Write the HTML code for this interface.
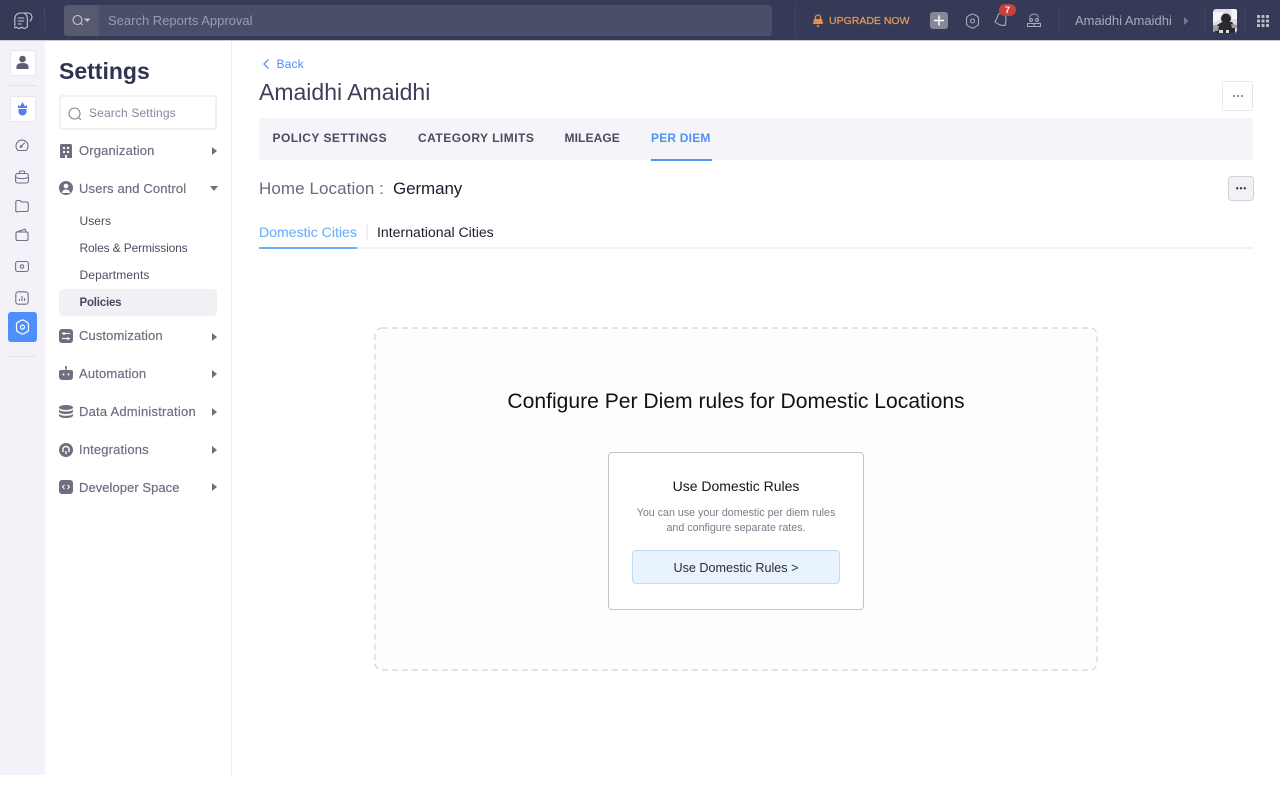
<!DOCTYPE html>
<html><head><meta charset="utf-8">
<style>
html,body{margin:0;padding:0;background:#fff;width:1280px;height:800px;overflow:hidden}
body{font-family:"Liberation Sans",sans-serif;position:relative}
.a{position:absolute;white-space:nowrap}
.t{position:absolute;white-space:nowrap;line-height:16px}
svg{position:absolute;overflow:visible}
.nav{font-size:13px;color:#6f6f82;letter-spacing:.15px;font-weight:400;left:79px;-webkit-text-stroke:.2px #6f6f82}
.sub{font-size:12px;color:#4d4e62;left:79.5px;letter-spacing:.05px}
.tab{font-size:12px;font-weight:700;color:#4a4b60;top:130px}
</style></head><body>
<!-- top bar -->
<div class="a" style="left:0;top:0;width:1280px;height:40px;background:#353a57"></div>
<div class="a" style="left:0;top:40px;width:1280px;height:1px;background:#c9cad6"></div>
<div class="a" style="left:44px;top:8px;height:26px;border-left:1px dotted #4d5270"></div>
<div class="a" style="left:64px;top:5px;width:708px;height:31px;background:#4a4e69;border-radius:3px"></div>
<div class="a" style="left:64px;top:5px;width:35px;height:31px;background:#57596f;border-radius:3px 0 0 3px"></div>
<svg style="left:14px;top:12px" width="19" height="18" viewBox="0 0 19 18" fill="none" stroke="#c9cad6" stroke-width="1.100" stroke-linecap="round" stroke-linejoin="round"><path d="M.8 14V6.500A5.500 5.500 0 0 1 6.300 1H14a4 4 0 0 1 4 4c0 1.800-.8 3-2 4"/><path d="M10.500 1.300c2 1.300 2.800 3 2.800 5.200v8.500c-1.200.8-2 1.500-3 1.500s-1.500-1.200-2.500-1.200-1.700 1.200-2.800 1.200-1.700-1.200-2.700-1.200-1.200.4-1.800.5"/><path d="M4.200 6h5.500M4.200 9h5.500M4.200 12h3"/></svg>
<svg style="left:72px;top:14px" width="20" height="14" viewBox="0 0 20 14" fill="none" stroke="#c5c6d2" stroke-width="1.100"><circle cx="5.500" cy="6" r="4.500"/><path d="M9 9.500l1.500 1.500"/><path d="M12 4.500h6.500l-3.200 3.500z" fill="#c5c6d2" stroke="none"/></svg>
<div class="t" style="left:108px;top:13px;font-size:13px;color:#9a9bac;letter-spacing:0">Search Reports Approval</div>
<div class="a" style="left:795px;top:4px;height:33px;border-left:1px dotted #4d5270"></div>
<svg style="left:812px;top:13px" width="12" height="15" viewBox="0 0 12 15"><path d="M3.500 6V4.500a2.500 2.500 0 0 1 5 0V6" fill="none" stroke="#e88f45" stroke-width="1.300"/><path d="M2 6h8l1 5H1z" fill="#e88f45"/><circle cx="6" cy="13" r="1.300" fill="#e46a4a"/></svg>
<div class="t" style="left:829px;top:12.500px;font-size:10.500px;font-weight:400;color:#e59a50;-webkit-text-stroke:.25px #e59a50;letter-spacing:0">UPGRADE NOW</div>
<div class="a" style="left:930px;top:12px;width:18px;height:17px;background:#85879a;border-radius:3px"></div>
<svg style="left:930px;top:12px" width="18" height="17" fill="none" stroke="#fff" stroke-width="1.500"><path d="M9 3.500v10M4 8.500h10"/></svg>
<svg style="left:965px;top:13px" width="15" height="16" viewBox="0 0 15 16" fill="none" stroke="#a9abbb" stroke-width="1.100"><path d="M6 1.400q1.500-.8 3 0l3.200 1.800q1.300.8 1.300 2.400v4.800q0 1.600-1.300 2.400l-3.200 1.800q-1.500.8-3 0l-3.200-1.800q-1.300-.8-1.300-2.400V5.600q0-1.600 1.300-2.400z"/><circle cx="7.500" cy="8" r="2"/></svg>
<svg style="left:994px;top:12px" width="15" height="15" viewBox="0 0 15 15" fill="none" stroke="#a9abbb" stroke-width="1.100" stroke-linejoin="round"><path d="M.8 9.500C2.500 8 3 6.500 3.500 4.500 4 2 6 1 8 1.500s4 2 4 4.500c0 2.500-.4 4.500-.7 7.300-3.800.5-7.500-.8-10.500-3.800z"/></svg>
<div class="a" style="left:999px;top:4px;width:17px;height:12px;border-radius:6px;background:#c8413f;color:#fff;font-size:9px;font-weight:700;line-height:12px;text-align:center">7</div>
<svg style="left:1026px;top:13px" width="16" height="15" viewBox="0 0 16 15" fill="none" stroke="#a9abbb" stroke-width="1.100"><circle cx="5" cy="7" r="1.400"/><circle cx="11" cy="7" r="1.400"/><path d="M3.500 4.500c1-4.500 8-4.500 9 0M1.500 10.500h13v3H1.500zM8 10.500v3"/></svg>
<div class="a" style="left:1059px;top:9px;height:23px;border-left:1px dotted #4d5270"></div>
<div class="t" style="left:1075px;top:12.500px;font-size:13px;color:#a9abbb;letter-spacing:0">Amaidhi Amaidhi</div>
<svg style="left:1184px;top:17px" width="5" height="8"><path d="M0 0l4.500 4L0 8z" fill="#74778d"/></svg>
<div class="a" style="left:1204px;top:9px;height:23px;border-left:1px dotted #4d5270"></div>
<svg style="left:1213px;top:9px" width="24" height="24" viewBox="0 0 24 24"><rect width="24" height="24" rx="3" fill="#dcdce2"/><path d="M0 3h10l-4 8-6 3z" fill="#f4f4f6"/><path d="M18 0h4a2 2 0 0 1 2 2v8h-5z" fill="#f6f6f8"/><circle cx="13" cy="9.500" r="5" fill="#26262c"/><path d="M4 16l5-3h10l3 5v6H1l1-3z" fill="#2a2a32"/><path d="M0 16l6 1-1 5-5 0zM18 15l6 1v3h-5z" fill="#9b9ca4"/><path d="M6 21h4v3H6zM13 21h3v3h-3z" fill="#dcdce2"/></svg>
<div class="a" style="left:1244px;top:9px;height:23px;border-left:1px dotted #4d5270"></div>
<svg style="left:1257px;top:15px" width="12" height="12" fill="#b9bbc9"><rect width="3" height="3" rx=".6"/><rect x="4.500" width="3" height="3" rx=".6"/><rect x="9" width="3" height="3" rx=".6"/><rect y="4.500" width="3" height="3" rx=".6"/><rect x="4.500" y="4.500" width="3" height="3" rx=".6"/><rect x="9" y="4.500" width="3" height="3" rx=".6"/><rect y="9" width="3" height="3" rx=".6"/><rect x="4.500" y="9" width="3" height="3" rx=".6"/><rect x="9" y="9" width="3" height="3" rx=".6"/></svg>

<!-- left rail -->
<div class="a" style="left:0;top:41px;width:45px;height:734px;background:#f2f2f8"></div>
<div class="a" style="left:231px;top:41px;width:1px;height:734px;background:#f0f0f4"></div>
<div class="a" style="left:10px;top:50px;width:24px;height:24px;background:#fff;border:1px solid #e6e6ee;border-radius:3px"></div>
<svg style="left:16px;top:55px" width="13" height="15" viewBox="0 0 13 15" fill="#5b5d72"><circle cx="6.500" cy="4" r="3.300"/><path d="M.5 14v-2.500c0-2 2-3.500 6-3.500s6 1.500 6 3.500V14z"/></svg>
<div class="a" style="left:8px;top:85px;width:29px;height:1px;background:#e2e2ea"></div>
<div class="a" style="left:10px;top:96px;width:24px;height:24px;background:#fff;border:1px solid #e6e6ee;border-radius:3px"></div>
<svg style="left:17px;top:101px" width="11" height="15" viewBox="0 0 11 15" fill="#4f7fe8"><path d="M1 4l2 1.500L5.500 1 8 5.500 10 4v3H1z"/><path d="M1.500 8h8v3.500c-1 2-2.500 3-4 3s-3-1-4-3z"/></svg>
<svg style="left:15px;top:138px" width="14" height="14" viewBox="0 0 14 14" fill="none" stroke="#6e7085" stroke-width="1.100" stroke-linecap="round"><path d="M3 12.500h8a6 6 0 1 0-8 0z" stroke-linejoin="round"/><path d="M6 8.500L9.500 5"/><circle cx="6" cy="8.500" r=".8"/></svg>
<svg style="left:15px;top:170px" width="14" height="14" viewBox="0 0 14 14" fill="none" stroke="#6e7085" stroke-width="1.100"><rect x=".6" y="3.500" width="12.800" height="9.500" rx="2"/><path d="M4.500 3.500V2a1 1 0 0 1 1-1h3a1 1 0 0 1 1 1v1.500M.6 7.500c4 1.500 8.800 1.500 12.800 0"/></svg>
<svg style="left:15px;top:199px" width="14" height="14" viewBox="0 0 14 14" fill="none" stroke="#6e7085" stroke-width="1.100"><path d="M.8 3a1.500 1.500 0 0 1 1.500-1.500h3l1 1.500h5.500a1.500 1.500 0 0 1 1.500 1.500V11a1.500 1.500 0 0 1-1.500 1.500h-8.500A1.500 1.500 0 0 1 .8 11z"/></svg>
<svg style="left:15px;top:228px" width="14" height="14" viewBox="0 0 14 14" fill="none" stroke="#6e7085" stroke-width="1.100"><path d="M1 5.500C1 4.500 1.500 4 2.500 3.700L10 1.200l1.200 2.800M1 5.500V11a1.500 1.500 0 0 0 1.500 1.500h9A1.500 1.500 0 0 0 13 11V5.500A1.500 1.500 0 0 0 11.500 4h-9"/></svg>
<svg style="left:15px;top:260px" width="14" height="13" viewBox="0 0 14 13" fill="none" stroke="#6e7085" stroke-width="1.100"><rect x=".6" y="1.500" width="12.800" height="10" rx="2"/><circle cx="7" cy="6.500" r="1.700"/></svg>
<svg style="left:15px;top:291px" width="14" height="14" viewBox="0 0 14 14" fill="none" stroke="#6e7085" stroke-width="1.100"><rect x=".8" y=".8" width="12.400" height="12.400" rx="2.500"/><path d="M4.500 10V8M7 10V5M9.500 10V7"/></svg>
<div class="a" style="left:8px;top:312px;width:29px;height:30px;background:#4e8ffb;border-radius:3px"></div>
<svg style="left:15px;top:319px" width="15" height="16" viewBox="0 0 15 16" fill="none" stroke="#fff" stroke-width="1.200"><path d="M6 1.400q1.500-.8 3 0l3.200 1.800q1.300.8 1.300 2.400v4.800q0 1.600-1.300 2.400l-3.200 1.800q-1.500.8-3 0l-3.200-1.800q-1.300-.8-1.300-2.400V5.600q0-1.600 1.300-2.400z"/><circle cx="7.500" cy="8" r="2"/></svg>
<div class="a" style="left:9px;top:356px;width:27px;height:1px;background:#e2e2ea"></div>

<!-- settings column -->
<div class="t" style="left:59px;top:57px;line-height:28px;font-size:23px;font-weight:700;color:#303450">Settings</div>
<div class="a" style="left:59px;top:95px;border:2px solid #f0f0f5;border-radius:3px;width:154px;height:31px"></div>
<svg style="left:68px;top:107px" width="14" height="14" fill="none" stroke="#85879a" stroke-width="1.100"><circle cx="6.500" cy="6.500" r="5.500"/><path d="M10.500 10.500l2.500 2.500"/></svg>
<div class="t" style="left:89px;top:104.500px;font-size:12px;color:#85879a;letter-spacing:.14px">Search Settings</div>

<svg style="left:60px;top:144px" width="12" height="14" fill="#6f6f82"><path d="M0 1.500A1.500 1.500 0 0 1 1.500 0h9A1.500 1.500 0 0 1 12 1.500V14H0z"/><path d="M3 3h2v2H3zM7 3h2v2H7zM3 7h2v2H3zM7 7h2v2H7zM5 11h2v3H5z" fill="#fff"/></svg>
<div class="t nav" style="top:143px">Organization</div>
<svg style="left:212px;top:147px" width="5" height="8"><path d="M0 0l5 4-5 4z" fill="#6f6f82"/></svg>

<svg style="left:59px;top:181px" width="14" height="14"><circle cx="7" cy="7" r="7" fill="#6f6f82"/><circle cx="7" cy="5" r="2.300" fill="#fff"/><path d="M2.800 12c.5-2.500 2-3.500 4.200-3.500s3.700 1 4.200 3.500" fill="#fff"/></svg>
<div class="t nav" style="top:181px">Users and Control</div>
<svg style="left:210px;top:186px" width="8" height="5"><path d="M0 0h8L4 5z" fill="#6f6f82"/></svg>

<div class="t sub" style="top:213px">Users</div>
<div class="t sub" style="top:240px;letter-spacing:-.14px">Roles &amp; Permissions</div>
<div class="t sub" style="top:267px;letter-spacing:.12px">Departments</div>
<div class="a" style="left:59px;top:289px;width:158px;height:27px;background:#f1f1f5;border-radius:4px"></div>
<div class="t sub" style="top:294.500px;font-size:11.500px;font-weight:700;letter-spacing:-.2px;color:#47485d">Policies</div>

<svg style="left:59px;top:329px" width="14" height="14"><rect width="14" height="14" rx="3" fill="#6f6f82"/><path d="M3 4.500h8M3 9.500h8" stroke="#fff" stroke-width="1"/><circle cx="5" cy="4.500" r="1.300" fill="#fff"/><circle cx="9" cy="9.500" r="1.300" fill="#fff"/></svg>
<div class="t nav" style="top:328px;letter-spacing:.1px">Customization</div>
<svg style="left:212px;top:333px" width="5" height="8"><path d="M0 0l5 4-5 4z" fill="#6f6f82"/></svg>

<svg style="left:59px;top:366px" width="14" height="14" fill="#6f6f82"><rect x="6.300" y="0" width="1.400" height="4"/><circle cx="7" cy="1" r="1"/><path d="M0 6a2 2 0 0 1 2-2h10a2 2 0 0 1 2 2v5a3 3 0 0 1-3 3H3a3 3 0 0 1-3-3z"/><circle cx="4.500" cy="8.500" r="1" fill="#fff"/><circle cx="9.500" cy="8.500" r="1" fill="#fff"/></svg>
<div class="t nav" style="top:366px">Automation</div>
<svg style="left:212px;top:370px" width="5" height="8"><path d="M0 0l5 4-5 4z" fill="#6f6f82"/></svg>

<svg style="left:59px;top:405px" width="14" height="13" fill="#6f6f82"><ellipse cx="7" cy="2.500" rx="7" ry="2.500"/><path d="M0 4.500c1 1.500 3.500 2 7 2s6-.5 7-2v2.500c-1 1.500-3.500 2-7 2s-6-.5-7-2z"/><path d="M0 8.800c1 1.500 3.500 2 7 2s6-.5 7-2v1.700c0 1.500-3 2.500-7 2.500s-7-1-7-2.500z"/></svg>
<div class="t nav" style="top:404px;letter-spacing:.22px">Data Administration</div>
<svg style="left:212px;top:408px" width="5" height="8"><path d="M0 0l5 4-5 4z" fill="#6f6f82"/></svg>

<svg style="left:59px;top:443px" width="14" height="14"><circle cx="7" cy="7" r="7" fill="#6f6f82"/><path d="M4 9V6a3 2.500 0 0 1 6 0v3M7 8v3" fill="none" stroke="#fff" stroke-width="1.400"/></svg>
<div class="t nav" style="top:442px">Integrations</div>
<svg style="left:212px;top:446px" width="5" height="8"><path d="M0 0l5 4-5 4z" fill="#6f6f82"/></svg>

<svg style="left:59px;top:480px" width="14" height="14"><rect width="14" height="14" rx="3" fill="#6f6f82"/><path d="M5.500 5L3.500 7l2 2M8.500 5l2 2-2 2" fill="none" stroke="#fff" stroke-width="1"/></svg>
<div class="t nav" style="top:479.500px;letter-spacing:.05px">Developer Space</div>
<svg style="left:212px;top:483px" width="5" height="8"><path d="M0 0l5 4-5 4z" fill="#6f6f82"/></svg>

<!-- main -->
<svg style="left:263px;top:59px" width="7" height="10" fill="none" stroke="#3e87f5" stroke-width="1.200"><path d="M5.500 .5L1 5l4.500 4.500"/></svg>
<div class="t" style="left:276.500px;top:56px;font-size:12px;color:#4f8ef0;letter-spacing:.15px">Back</div>
<div class="t" style="left:259px;top:78px;line-height:28px;font-size:23px;color:#3c3f58;letter-spacing:0">Amaidhi Amaidhi</div>
<div class="a" style="left:1222px;top:81px;width:29px;height:28px;border:1px solid #e6e6ec;border-radius:3px"></div>
<svg style="left:1233px;top:95px" width="10" height="2" fill="#4a4b60"><circle cx="1" cy="1" r=".9"/><circle cx="5" cy="1" r=".9"/><circle cx="9" cy="1" r=".9"/></svg>

<div class="a" style="left:259px;top:118px;width:994px;height:42px;background:#f4f4f9;border-radius:2px"></div>
<div class="t tab" style="left:272.500px;letter-spacing:.45px">POLICY SETTINGS</div>
<div class="t tab" style="left:418px;letter-spacing:.48px">CATEGORY LIMITS</div>
<div class="t tab" style="left:564.500px;letter-spacing:.1px">MILEAGE</div>
<div class="t tab" style="left:651px;color:#4e93f5;letter-spacing:.2px">PER DIEM</div>
<div class="a" style="left:651px;top:159px;width:61px;height:2px;background:#4e93f5"></div>

<div class="t" style="left:259px;top:180.500px;font-size:17px;color:#6a6b7d;letter-spacing:.08px">Home Location :</div>
<div class="t" style="left:393px;top:180.500px;font-size:17px;color:#1c1d2c;letter-spacing:-.1px">Germany</div>
<div class="a" style="left:1228px;top:176px;width:24px;height:23px;background:#f2f2f6;border:1px solid #d2d2d8;border-radius:4px"></div>
<svg style="left:1236px;top:187px" width="10" height="3" fill="#2f3045"><circle cx="1.200" cy="1.300" r="1.200"/><circle cx="5" cy="1.300" r="1.200"/><circle cx="8.800" cy="1.300" r="1.200"/></svg>

<div class="t" style="left:259px;top:224px;font-size:14.100px;color:#6eb0fb;-webkit-text-stroke:.1px #6eb0fb">Domestic Cities</div>
<div class="a" style="left:366px;top:224px;width:2px;height:16px;background:#f0f0f4"></div>
<div class="t" style="left:377px;top:224px;font-size:14.100px;color:#1c1d2c">International Cities</div>
<div class="a" style="left:259px;top:247px;width:994px;height:2px;background:#f0f0f5"></div>
<div class="a" style="left:259px;top:247px;width:98px;height:2px;background:#6eb0fb"></div>

<!-- dashed box -->
<svg style="left:374px;top:327px" width="724" height="344"><rect x="1" y="1" width="722" height="342" rx="7" fill="#fdfdfd" stroke="#d4d4d8" stroke-width="1.200" stroke-dasharray="6 4"/></svg>
<div class="t" style="left:374px;top:388.500px;width:724px;line-height:26px;text-align:center;font-size:21.100px;color:#111;letter-spacing:0">Configure Per Diem rules for Domestic Locations</div>
<div class="a" style="left:608px;top:452px;width:254px;height:156px;background:#fff;border:1px solid #c5c5c9;border-radius:4px"></div>
<div class="t" style="left:607px;top:478px;width:258px;text-align:center;font-size:14px;color:#15161f">Use Domestic Rules</div>
<div class="t" style="left:607px;top:505.500px;width:258px;text-align:center;font-size:10.700px;color:#7b7c8a;line-height:15.500px;letter-spacing:0">You can use your domestic per diem rules<br>and configure separate rates.</div>
<div class="a" style="left:632px;top:550px;width:206px;height:32px;background:#e8f3fe;border:1px solid #b9dcf8;border-radius:4px"></div>
<div class="t" style="left:631px;top:559.500px;width:210px;text-align:center;font-size:12.600px;color:#2b2c3a">Use Domestic Rules &gt;</div>
</body></html>
